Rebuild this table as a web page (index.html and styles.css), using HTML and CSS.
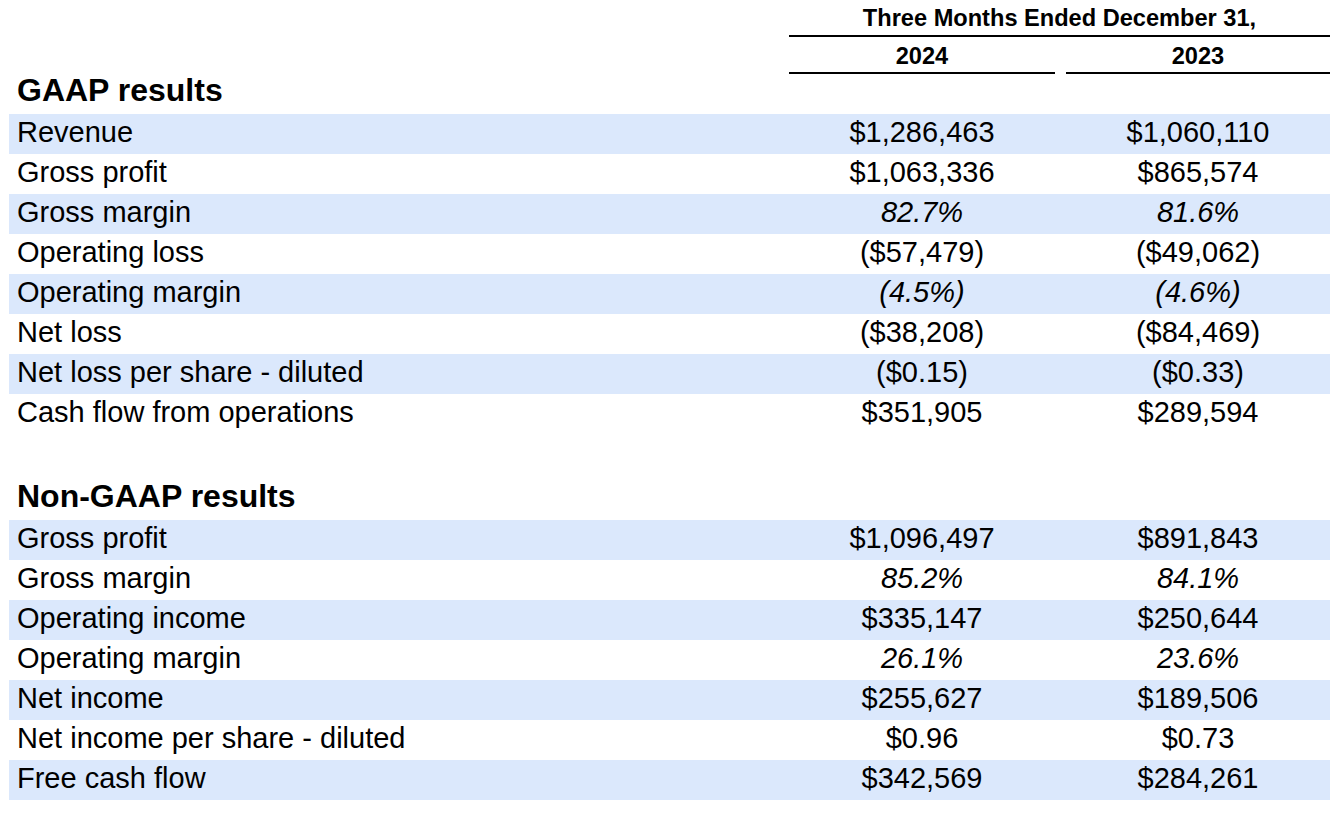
FILE: index.html
```html
<!DOCTYPE html>
<html>
<head>
<meta charset="utf-8">
<link rel="stylesheet" href="styles.css">
</head>
<body>
<div class="table">
  <div class="hdr-top">
    <div class="lbl"></div>
    <div class="span">Three Months Ended December 31,</div>
  </div>
  <div class="hdr-years">
    <div class="lbl"></div>
    <div class="yr">2024</div>
    <div class="yr">2023</div>
  </div>

  <div class="section">GAAP results</div>
  <div class="row alt"><div class="lbl">Revenue</div><div class="val">$1,286,463</div><div class="val">$1,060,110</div></div>
  <div class="row"><div class="lbl">Gross profit</div><div class="val">$1,063,336</div><div class="val">$865,574</div></div>
  <div class="row alt"><div class="lbl">Gross margin</div><div class="val it">82.7%</div><div class="val it">81.6%</div></div>
  <div class="row"><div class="lbl">Operating loss</div><div class="val">($57,479)</div><div class="val">($49,062)</div></div>
  <div class="row alt"><div class="lbl">Operating margin</div><div class="val it">(4.5%)</div><div class="val it">(4.6%)</div></div>
  <div class="row"><div class="lbl">Net loss</div><div class="val">($38,208)</div><div class="val">($84,469)</div></div>
  <div class="row alt"><div class="lbl">Net loss per share - diluted</div><div class="val">($0.15)</div><div class="val">($0.33)</div></div>
  <div class="row"><div class="lbl">Cash flow from operations</div><div class="val">$351,905</div><div class="val">$289,594</div></div>

  <div class="section gap">Non-GAAP results</div>
  <div class="row alt"><div class="lbl">Gross profit</div><div class="val">$1,096,497</div><div class="val">$891,843</div></div>
  <div class="row"><div class="lbl">Gross margin</div><div class="val it">85.2%</div><div class="val it">84.1%</div></div>
  <div class="row alt"><div class="lbl">Operating income</div><div class="val">$335,147</div><div class="val">$250,644</div></div>
  <div class="row"><div class="lbl">Operating margin</div><div class="val it">26.1%</div><div class="val it">23.6%</div></div>
  <div class="row alt"><div class="lbl">Net income</div><div class="val">$255,627</div><div class="val">$189,506</div></div>
  <div class="row"><div class="lbl">Net income per share - diluted</div><div class="val">$0.96</div><div class="val">$0.73</div></div>
  <div class="row alt"><div class="lbl">Free cash flow</div><div class="val">$342,569</div><div class="val">$284,261</div></div>
</div>
</body>
</html>
```

FILE: styles.css
```css
html, body {
  margin: 0;
  padding: 0;
  background: #ffffff;
}
body {
  font-family: "Liberation Sans", Arial, Helvetica, sans-serif;
  color: #000000;
}
.table {
  width: 1321px;
  margin-left: 9px;
}
.hdr-top {
  display: grid;
  grid-template-columns: 780px 541px;
  height: 37px;
}
.hdr-top .span {
  font-weight: bold;
  font-size: 23.6px;
  text-align: center;
  line-height: 36px;
  border-bottom: 2px solid #000;
  height: 35px;
}
.hdr-years {
  display: grid;
  grid-template-columns: 769px 266px 264px;
  column-gap: 11px;
  height: 37px;
}
.hdr-years .yr {
  font-weight: bold;
  font-size: 23.6px;
  text-align: center;
  line-height: 38px;
  height: 35px;
  border-bottom: 2px solid #000;
}
.section {
  height: 40px;
  line-height: 33px;
  font-weight: bold;
  font-size: 32px;
  padding-left: 8px;
}
.section.gap {
  margin-top: 46px;
}
.row {
  display: grid;
  grid-template-columns: 769px 266px 264px;
  column-gap: 11px;
  height: 40px;
  line-height: 37px;
  font-size: 29px;
}
.row.alt {
  background: #dbe8fc;
}
.row .lbl {
  padding-left: 8px;
  white-space: nowrap;
}
.row .val {
  text-align: center;
  white-space: nowrap;
}
.row .val.it {
  font-style: italic;
}
```
